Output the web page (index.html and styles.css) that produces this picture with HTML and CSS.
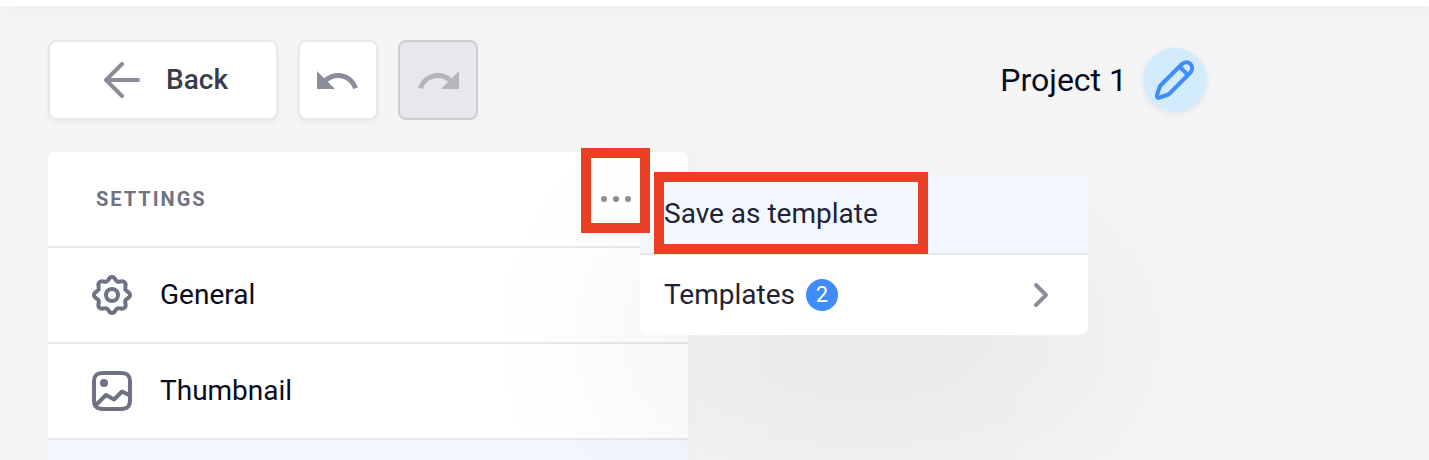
FILE: index.html
```html
<!DOCTYPE html>
<html lang="en">
<head>
<meta charset="utf-8">
<meta name="viewport" content="width=device-width, initial-scale=1">
<title>Project 1</title>
<link rel="stylesheet" href="styles.css">
</head>
<body>
<header class="topbar"></header>
<main class="editor">
  <div class="toolbar">
    <button class="btn btn-back" type="button">
      <svg class="icon-arrow" width="36" height="36" viewBox="0 0 36 36" aria-hidden="true"><path d="M34 18H3M18 2 2 18 18 34"/></svg>
      <span>Back</span>
    </button>
    <button class="btn btn-icon" type="button" aria-label="Undo">
      <svg width="48" height="48" viewBox="0.500 -0.500 24 24" aria-hidden="true"><path d="M12.500 8c-2.650 0-5.050.99-6.900 2.600L2 7v9h9l-3.620-3.620c1.390-1.160 3.160-1.880 5.120-1.880 3.540 0 6.550 2.310 7.600 5.500l2.370-.78C21.080 11.030 17.150 8 12.500 8z"/></svg>
    </button>
    <button class="btn btn-icon" type="button" aria-label="Redo" disabled>
      <svg width="48" height="48" viewBox="-0.500 -0.500 24 24" aria-hidden="true"><path d="M18.400 10.600C16.550 8.990 14.150 8 11.500 8c-4.650 0-8.580 3.030-9.960 7.220L3.900 16c1.050-3.190 4.050-5.500 7.600-5.500 1.950 0 3.730.72 5.120 1.880L13 16h9V7l-3.600 3.600z"/></svg>
    </button>
    <div class="project">
      <h1 class="project-name">Project 1</h1>
      <button class="edit" type="button" aria-label="Rename project">
        <svg width="64" height="64" viewBox="0 0 64 64" aria-hidden="true"><path d="M14.500 49.500c-1-1-.6-2.200 0-4l2.500-7.500L38 17c3.500-3.500 7.200-3.200 9.500-1s2.500 6-1 9.500L25.500 46.500 18 49c-1.800.6-2.700 1.300-3.500.5ZM36.500 18.500l8.500 8.500"/></svg>
      </button>
    </div>
  </div>

  <section class="panel">
    <div class="panel-head">
      <h2 class="panel-title">Settings</h2>
      <button class="more" type="button" aria-label="More options">
        <svg width="32" height="8" viewBox="0 0 32 8" aria-hidden="true"><circle cx="4" cy="4" r="3"/><circle cx="16" cy="4" r="3"/><circle cx="28" cy="4" r="3"/></svg>
      </button>
    </div>
    <button class="row" type="button">
      <svg class="row-icon" width="40" height="40" viewBox="0 0 40 40" aria-hidden="true"><path d="M20 2C23.500 2 22.700 5.500 25.500 6.600C28.300 7.700 30.200 4.800 32.700 7.300C35.200 9.800 32.300 11.700 33.400 14.500C34.500 17.300 38 16.500 38 20C38 23.500 34.500 22.700 33.400 25.500C32.300 28.300 35.200 30.200 32.700 32.700C30.200 35.200 28.300 32.300 25.500 33.400C22.700 34.500 23.500 38 20 38C16.500 38 17.300 34.500 14.500 33.400C11.700 32.300 9.800 35.200 7.300 32.700C4.800 30.200 7.700 28.300 6.600 25.500C5.500 22.700 2 23.500 2 20C2 16.500 5.500 17.300 6.600 14.500C7.700 11.700 4.800 9.800 7.300 7.300C9.800 4.800 11.700 7.700 14.500 6.600C17.300 5.500 16.500 2 20 2Z"/><circle cx="20" cy="20" r="6"/></svg>
      <span>General</span>
    </button>
    <button class="row" type="button">
      <svg class="row-icon" width="40" height="40" viewBox="0 0 40 40" aria-hidden="true"><path d="M2 11C2 4.500 4.500 2 11 2H29C35.500 2 38 4.500 38 11V29C38 35.500 35.500 38 29 38H11C4.500 38 2 35.500 2 29Z"/><path d="M4 34 14 24l8 4.500 8-8 8 4"/><circle class="dot" cx="12" cy="12" r="4"/></svg>
      <span>Thumbnail</span>
    </button>
    <button class="row row-active" type="button" aria-label="Selected section"></button>

    <div class="menu">
      <button class="menu-item menu-item-active" type="button">Save as template</button>
      <button class="menu-item" type="button">
        <span>Templates</span>
        <span class="badge">2</span>
        <svg class="chevron" width="16" height="26" viewBox="0 0 16 26" aria-hidden="true"><path d="M3 3l10 10L3 23"/></svg>
      </button>
    </div>
    <div class="mark mark-more"></div>
    <div class="mark mark-save"></div>
  </section>
</main>
</body>
</html>
```

FILE: styles.css
```css
* {
  box-sizing: border-box;
}

body {
  margin: 0;
  background: #f5f5f5;
  color: #070a1c;
  font-family: Roboto, "Liberation Sans", sans-serif;
  font-size: 28px;
  line-height: 32px;
}

button {
  margin: 0;
  padding: 0;
  border: 0;
  background: none;
  color: inherit;
  font: inherit;
  text-align: left;
}

h1,
h2 {
  margin: 0;
}

svg {
  display: block;
  flex: none;
}

.topbar {
  height: 6px;
  background: #fff;
  box-shadow: 8px 2px 24px rgba(0, 0, 0, 0.1);
}

.editor {
  padding: 34px 48px 0;
}

.toolbar {
  display: flex;
  align-items: center;
  gap: 20px;
  margin-bottom: 32px;
}

.btn {
  display: flex;
  align-items: center;
  justify-content: center;
  height: 80px;
  border: 2px solid #e7e8ec;
  border-radius: 8px;
  background: #fff;
  box-shadow: 0 2px 4px rgba(0, 0, 0, 0.05);
  fill: #8b8d9a;
}

.btn:disabled {
  border-color: #cdced5;
  background: #e7e8ec;
  box-shadow: none;
  fill: #b5b6bb;
}

.btn-back {
  gap: 26px;
  width: 230px;
  padding-right: 6px;
  padding-left: 12px;
  color: #3a3c4b;
  font-weight: 500;
}

.btn-icon {
  width: 80px;
}

.icon-arrow {
  fill: none;
  stroke: #8b8d9a;
  stroke-width: 4;
  stroke-linecap: round;
  stroke-linejoin: round;
}

.project {
  display: flex;
  align-items: center;
  gap: 16px;
  margin-right: 174px;
  margin-left: auto;
}

.project-name {
  font-size: 32px;
  font-weight: 400;
  line-height: 40px;
}

.edit {
  border-radius: 50%;
  background: #d3ecfd;
  box-shadow: 0 2px 6px rgba(0, 0, 0, 0.08);
}

.edit svg {
  fill: none;
  stroke: #408cfa;
  stroke-width: 4;
  stroke-linejoin: round;
}

.panel {
  position: relative;
  width: 640px;
  border-radius: 8px 8px 0 0;
  background: #fff;
  box-shadow: 0 4px 24px rgba(0, 0, 0, 0.02);
}

.panel-head,
.row {
  display: flex;
  align-items: center;
  width: 100%;
  height: 96px;
  border-bottom: 2px solid #e7e8ec;
}

.panel-head {
  justify-content: space-between;
  padding: 0 56px 0 48px;
}

.panel-title {
  color: #6f7282;
  font-size: 20px;
  font-weight: 700;
  line-height: 24px;
  letter-spacing: 2px;
  text-transform: uppercase;
}

.more {
  fill: #8b8d9a;
}

.row {
  gap: 28px;
  padding: 0 44px;
}

.row-active {
  height: 20px;
  border-bottom: 0;
  background: #f3f8ff;
}

.row-icon {
  fill: none;
  stroke: #6f7282;
  stroke-width: 4;
  stroke-linejoin: round;
}

.row-icon .dot {
  fill: #6f7282;
  stroke: none;
}

.menu {
  position: absolute;
  top: 23px;
  left: 592px;
  width: 448px;
  border-radius: 8px;
  background: #fff;
  box-shadow: 0 80px 200px rgba(0, 0, 0, 0.08);
  color: #212335;
}

.menu-item {
  display: flex;
  align-items: center;
  gap: 11px;
  width: 100%;
  height: 80px;
  padding: 0 39px 0 24px;
}

.menu-item-active {
  border-bottom: 2px solid #e7e8ec;
  border-radius: 8px 8px 0 0;
  background: #f3f8ff;
}

.badge {
  width: 32px;
  height: 32px;
  border-radius: 50%;
  background: #408cfa;
  color: #fff;
  font-size: 22px;
  text-align: center;
}

.chevron {
  margin-left: auto;
  fill: none;
  stroke: #8b8d9a;
  stroke-width: 4;
  stroke-linecap: round;
  stroke-linejoin: round;
}

.mark {
  position: absolute;
  border: 10px solid #e93f25;
  pointer-events: none;
}

.mark-more {
  top: -4px;
  left: 533px;
  width: 69px;
  height: 85px;
}

.mark-save {
  top: 20px;
  left: 606px;
  width: 274px;
  height: 82px;
}
```
